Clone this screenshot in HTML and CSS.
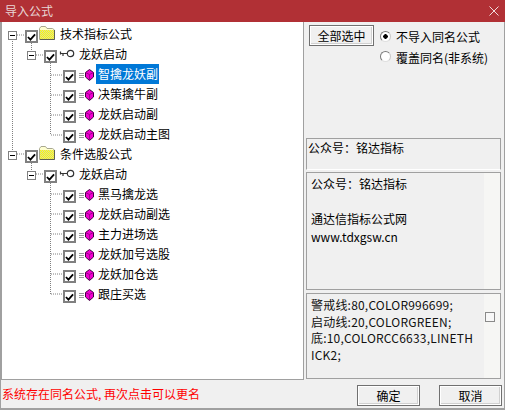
FILE: index.html
```html
<!DOCTYPE html>
<html lang="zh">
<head>
<meta charset="utf-8">
<title>导入公式</title>
<link rel="stylesheet" href="styles.css">
</head>
<body>
<svg class="defs" width="0" height="0" aria-hidden="true">
  <defs>
    <pattern id="dither" width="2" height="2" patternUnits="userSpaceOnUse">
      <rect width="2" height="2" fill="#ffff00"/>
      <rect width="1" height="1" fill="#d8d8a0"/>
      <rect x="1" y="1" width="1" height="1" fill="#d8d8a0"/>
    </pattern>
    <symbol id="i-folder" viewBox="0 0 16 14">
      <path d="M.5 13.5V2.5L2 .5H6.5L8 2.5H13.5L15.5 4V13.5Z" fill="#ffffd0" stroke="#a8a890"/>
      <rect x="1" y="4" width="14" height="9" fill="url(#dither)"/>
      <path d="M1 13.5H15.5V4" fill="none" stroke="#606050"/>
    </symbol>
    <symbol id="i-key" viewBox="0 0 16 9">
      <circle cx="11.5" cy="4.5" r="3.2" fill="#fff" stroke="#333" stroke-width="1.2"/>
      <path d="M8 4.5H1M1.5 2.5V5.5M4 4.5V7" fill="none" stroke="#333" stroke-width="1.2"/>
    </symbol>
    <symbol id="i-gem" viewBox="0 0 15 12">
      <path d="M0 4.5H5M0 6.5H5M0 8.5H5" stroke="#999" stroke-width="1"/>
      <path d="M10.5 .5L14.5 3.5V8L10.5 11.5L6.5 8V3.5Z" fill="#f000d0" stroke="#400040" stroke-width="1"/>
      <path d="M10.5 5.5V11M6.5 3.5L10.5 5.5L14.5 3.5" fill="none" stroke="#a00090" stroke-width="1"/>
    </symbol>
    <symbol id="i-check" viewBox="0 0 10 9">
      <path d="M1 4.5L3.8 7.5L9 1.5" fill="none" stroke="#000" stroke-width="2"/>
    </symbol>
  </defs>
</svg>
<div class="window">
  <header class="titlebar">
    <span class="title">导入公式</span>
    <svg class="close" width="10" height="10" viewBox="0 0 10 10"><path d="M.5 .5L9.5 9.5M9.5 .5L.5 9.5" stroke="#f0dcdc" stroke-width="1"/></svg>
  </header>
  <div class="content">
    <div class="tree">
      <svg class="lines" width="100" height="300" aria-hidden="true">
        <path d="M10.5 17V129M29.5 21V28M48.5 41V113M29.5 141V148M48.5 161V272" class="dots"/>
        <path d="M15 13H23M34 33H42M49 53H61M49 73H61M49 93H61M49 113H61M15 132H23M34 152H42M49 172H61M49 192H61M49 212H61M49 232H61M49 252H61M49 272H61" class="dots"/>
      </svg>
      <div class="row lvl0"><span class="exp"></span><span class="cb"><svg><use href="#i-check"/></svg></span><svg class="ico folder"><use href="#i-folder"/></svg><span class="label">技术指标公式</span></div>
      <div class="row lvl1"><span class="exp"></span><span class="cb"><svg><use href="#i-check"/></svg></span><svg class="ico key"><use href="#i-key"/></svg><span class="label">龙妖启动</span></div>
      <div class="row lvl2"><span class="cb"><svg><use href="#i-check"/></svg></span><svg class="ico gem"><use href="#i-gem"/></svg><span class="label selected">智擒龙妖副</span></div>
      <div class="row lvl2"><span class="cb"><svg><use href="#i-check"/></svg></span><svg class="ico gem"><use href="#i-gem"/></svg><span class="label">决策擒牛副</span></div>
      <div class="row lvl2"><span class="cb"><svg><use href="#i-check"/></svg></span><svg class="ico gem"><use href="#i-gem"/></svg><span class="label">龙妖启动副</span></div>
      <div class="row lvl2"><span class="cb"><svg><use href="#i-check"/></svg></span><svg class="ico gem"><use href="#i-gem"/></svg><span class="label">龙妖启动主图</span></div>
      <div class="row lvl0"><span class="exp"></span><span class="cb"><svg><use href="#i-check"/></svg></span><svg class="ico folder"><use href="#i-folder"/></svg><span class="label">条件选股公式</span></div>
      <div class="row lvl1"><span class="exp"></span><span class="cb"><svg><use href="#i-check"/></svg></span><svg class="ico key"><use href="#i-key"/></svg><span class="label">龙妖启动</span></div>
      <div class="row lvl2"><span class="cb"><svg><use href="#i-check"/></svg></span><svg class="ico gem"><use href="#i-gem"/></svg><span class="label">黑马擒龙选</span></div>
      <div class="row lvl2"><span class="cb"><svg><use href="#i-check"/></svg></span><svg class="ico gem"><use href="#i-gem"/></svg><span class="label">龙妖启动副选</span></div>
      <div class="row lvl2"><span class="cb"><svg><use href="#i-check"/></svg></span><svg class="ico gem"><use href="#i-gem"/></svg><span class="label">主力进场选</span></div>
      <div class="row lvl2"><span class="cb"><svg><use href="#i-check"/></svg></span><svg class="ico gem"><use href="#i-gem"/></svg><span class="label">龙妖加号选股</span></div>
      <div class="row lvl2"><span class="cb"><svg><use href="#i-check"/></svg></span><svg class="ico gem"><use href="#i-gem"/></svg><span class="label">龙妖加仓选</span></div>
      <div class="row lvl2"><span class="cb"><svg><use href="#i-check"/></svg></span><svg class="ico gem"><use href="#i-gem"/></svg><span class="label">跟庄买选</span></div>
    </div>
    <aside class="side">
      <div class="options">
        <button class="btn selectall">全部选中</button>
        <div class="radios">
          <div class="radio-row"><span class="radio on"></span><span>不导入同名公式</span></div>
          <div class="radio-row"><span class="radio"></span><span class="lower">覆盖同名(非系统)</span></div>
        </div>
      </div>
      <div class="box name">公众号：铭达指标</div>
      <div class="box desc">公众号：铭达指标<br><br>通达信指标公式网<br>www.tdxgsw.cn</div>
      <div class="box code">
        <div class="code-text">警戒线:80,COLOR996699;<br>启动线:20,COLORGREEN;<br>底:10,COLORCC6633,LINETH<br>ICK2;</div>
        <span class="small-cb"></span>
      </div>
    </aside>
  </div>
  <footer class="footer">
    <span class="status">系统存在同名公式, 再次点击可以更名</span>
    <div class="actions">
      <button class="btn action">确定</button>
      <button class="btn action">取消</button>
    </div>
  </footer>
</div>
</body>
</html>
```
FILE: styles.css
```css
* { box-sizing: border-box; }
html, body { margin: 0; padding: 0; }
body {
  width: 505px;
  height: 410px;
  overflow: hidden;
  font-family: "Noto Sans CJK SC", "Liberation Sans", sans-serif;
  font-size: 12px;
  color: #000;
}
.defs { position: absolute; }
.window {
  width: 505px;
  height: 410px;
  display: flex;
  flex-direction: column;
  background: #f0f0f0;
  border: 1px solid #a0a0a0;
  border-top: 0;
  border-bottom: 2px solid #a0a0a0;
}
.titlebar {
  height: 22px;
  flex: none;
  margin: 0 -1px;
  background: #b13035;
  display: flex;
  align-items: center;
  justify-content: space-between;
  padding: 0 6px 0 5px;
  color: #e8d6d6;
}
.title { font-size: 12px; line-height: 22px; }
.content {
  height: 358px;
  flex: none;
  display: flex;
}
.tree {
  position: relative;
  width: 303px;
  flex: none;
  background: #fff;
  border-left: 1px solid #a0a0a0;
  border-right: 1px solid #a0a0a0;
  border-bottom: 1px solid #a0a0a0;
  padding-top: 2px;
}
.lines { position: absolute; left: 0; top: 0; }
.dots { fill: none; stroke: #808080; stroke-width: 1; stroke-dasharray: 1 1; }
.row {
  position: relative;
  height: 20px;
  display: flex;
  align-items: flex-start;
}
.lvl0 { padding-left: 6px; }
.lvl1 { padding-left: 25px; }
.lvl2 { padding-left: 61px; }
.exp {
  width: 9px;
  height: 9px;
  flex: none;
  border: 1px solid #808080;
  background: linear-gradient(#000, #000) center / 5px 1px no-repeat #fff;
  margin: 7px 8px 0 0;
}
.cb {
  width: 13px;
  height: 13px;
  flex: none;
  border: 2px solid #808080;
  background: #fff;
  display: flex;
  align-items: center;
  justify-content: center;
  margin-top: 6px;
}
.cb svg { width: 9px; height: 8px; display: block; }
.ico { flex: none; display: block; }
.folder { width: 16px; height: 14px; margin: 2px 3px 0 1px; }
.key { width: 16px; height: 9px; margin: 5px 2px 0 2px; }
.gem { width: 15px; height: 12px; margin: 5px 2px 0 3px; }
.label { line-height: 20px; padding: 0 1px 0 2px; white-space: nowrap; }
.selected { background: #0078d7; color: #fff; }
.side {
  flex: 1;
  min-width: 0;
  display: flex;
  flex-direction: column;
  padding-left: 2px;
}
.options {
  height: 116px;
  flex: none;
  display: flex;
  align-items: flex-start;
  padding: 3px 0 0 3px;
}
.btn {
  font: inherit;
  color: #000;
  background: #f0f0f0;
  border: 1px solid #707070;
  box-shadow: inset 0 0 0 1px #fff, inset -1px -1px 0 1px #d0d0d0;
  padding: 0;
}
.selectall { width: 65px; height: 21px; }
.radios { margin: 1px 0 0 6px; display: flex; flex-direction: column; }
.radio-row { height: 20px; display: flex; align-items: center; gap: 5px; white-space: nowrap; }
.lower { padding-top: 2px; }
.radio {
  width: 11px;
  height: 11px;
  border-radius: 50%;
  border: 1px solid;
  border-color: #7a7a7a #c8c8c8 #e0e0e0 #7a7a7a;
  background: #fff;
  flex: none;
}
.radio.on { background: radial-gradient(circle, #000 0 2px, #fff 2.5px); }
.box {
  border: 1px solid #a0a0a0;
  background: #f0f0f0;
  margin-right: 3px;
  flex: none;
}
.name {
  height: 32px;
  padding-left: 1px;
  line-height: 17px;
  border-bottom-color: #fff;
}
.desc {
  height: 118px;
  margin-top: 2px;
  padding: 2px 0 0 4px;
  line-height: 17.5px;
  background: linear-gradient(to right, #f0f0f0 177px, #f6f6f4 177px);
}
.code {
  height: 86px;
  margin-top: 3px;
  padding: 3px 5px 0 4px;
  display: flex;
  justify-content: space-between;
  align-items: flex-start;
  line-height: 16.7px;
  background: linear-gradient(to right, #f0f0f0 177px, #f6f6f4 177px);
}
.code-text { white-space: nowrap; color: #111; letter-spacing: .2px; }
.small-cb {
  width: 10px;
  height: 10px;
  border: 1px solid #8a8a8a;
  background: #f8f8f8;
  margin-top: 15px;
  flex: none;
}
.footer {
  flex: 1;
  min-height: 0;
  display: flex;
  align-items: center;
  justify-content: space-between;
  padding: 0 2px 0 1px;
}
.status { color: #f00; line-height: 20px; white-space: nowrap; }
.actions { display: flex; gap: 19px; margin-top: 3px; }
.action { width: 63px; height: 21px; }
```
